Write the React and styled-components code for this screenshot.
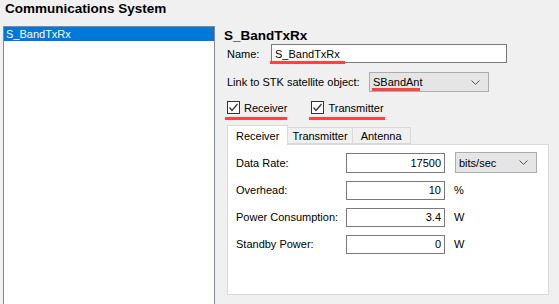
import React from "react"
import styled, { createGlobalStyle } from "styled-components"

const GlobalStyle = createGlobalStyle`
  html, body {
    margin: 0;
    padding: 0;
    background: #f0f0f0;
    overflow: hidden;
  }
  body {
    font-family: "Liberation Sans", Arial, sans-serif;
    font-size: 11px;
    color: #000;
  }
`

const Page = styled.div`
  width: 559px;
  height: 304px;
  overflow: hidden;
  display: flex;
  flex-direction: column;
`

const Title = styled.div`
  flex-shrink: 0;
  height: 26px;
  padding: 1px 0 0 5px;
  box-sizing: border-box;
  font-size: 13.5px;
  font-weight: 700;
  line-height: 16px;
`

const Body = styled.div`
  display: flex;
  flex: 1;
  min-height: 0;
  padding-left: 3px;
`

const ListBox = styled.div`
  flex-shrink: 0;
  width: 212px;
  height: 300px;
  box-sizing: border-box;
  border: 1px solid #828790;
  background: #fff;
`

const ListItem = styled.div`
  height: 14px;
  line-height: 14px;
  padding-left: 2px;
  background: ${p => (p.selected ? "#0078d7" : "transparent")};
  color: ${p => (p.selected ? "#fff" : "#000")};
`

const Detail = styled.div`
  flex: 1;
  padding: 0 0 0 9px;
  display: flex;
  flex-direction: column;
`

const Heading = styled.div`
  font-size: 13.5px;
  font-weight: 700;
  line-height: 16px;
  margin-top: 2px;
`

const Form = styled.div`
  padding-left: 3px;
  display: flex;
  flex-direction: column;
`

const Row = styled.div`
  display: flex;
  align-items: center;
  height: ${p => p.h || 20}px;
  margin-top: ${p => p.mt || 0}px;
`

const Label = styled.span`
  width: ${p => (p.w ? `${p.w}px` : "auto")};
  flex-shrink: 0;
`

const Field = styled.div`
  position: relative;
  display: flex;
`

const TextBox = styled.input`
  box-sizing: border-box;
  width: ${p => p.w}px;
  height: ${p => p.h || 19}px;
  border: 1px solid #7a7a7a;
  background: #fff;
  font: inherit;
  padding: 0 3px;
  margin: 0;
  text-align: ${p => (p.right ? "right" : "left")};
  outline: none;
  color: #000;
`

const Combo = styled.div`
  box-sizing: border-box;
  width: ${p => p.w}px;
  height: ${p => p.h || 20}px;
  margin-left: ${p => p.ml || 0}px;
  border: 1px solid #adadad;
  background: #e5e5e5;
  display: flex;
  align-items: center;
  justify-content: space-between;
  padding: 0 8px 0 3px;
`

const Mark = styled.div`
  position: absolute;
  left: ${p => p.left}px;
  top: ${p => p.top}px;
  width: ${p => p.w}px;
  height: 3px;
  background: #ff4343;
`

const CheckRow = styled.div`
  display: flex;
  align-items: center;
  height: 13px;
  margin-top: 9px;
`

const Check = styled.label`
  position: relative;
  display: flex;
  align-items: center;
  gap: 4px;
  margin-right: ${p => p.mr || 0}px;
`

const Box = styled.span`
  width: 13px;
  height: 13px;
  box-sizing: border-box;
  border: 1px solid #333;
  background: #fff;
  display: flex;
  align-items: center;
  justify-content: center;
`

const Tabs = styled.div`
  margin-top: 10px;
  display: flex;
  align-items: flex-end;
  height: 20px;
`

const Tab = styled.div`
  box-sizing: border-box;
  height: ${p => (p.active ? 20 : 17)}px;
  padding: 0 ${p => p.px}px;
  margin-bottom: ${p => (p.active ? -1 : 0)}px;
  border: 1px solid #d9d9d9;
  border-bottom: ${p => (p.active ? "none" : "1px solid #d9d9d9")};
  border-left: ${p => (p.first || p.active ? "1px solid #d9d9d9" : "none")};
  background: ${p => (p.active ? "#fff" : "#f0f0f0")};
  display: flex;
  align-items: center;
  position: relative;
  z-index: ${p => (p.active ? 1 : 0)};
`

const TabPage = styled.div`
  box-sizing: border-box;
  width: 322px;
  height: 151px;
  border: 1px solid #d9d9d9;
  background: #fff;
  padding: 7px 0 0 8px;
  display: grid;
  grid-template-columns: 110px 99px auto;
  grid-template-rows: 21px;
  grid-auto-rows: 20px;
  row-gap: 7px;
  align-content: start;
  align-items: center;
`

const Unit = styled.span`
  padding-left: 9px;
`

const Chevron = () => (
  <svg width="9" height="5" viewBox="0 0 9 5">
    <polyline points="0.5,0.5 4.5,4.5 8.5,0.5" fill="none" stroke="#555" strokeWidth="1" />
  </svg>
)

const Tick = () => (
  <svg width="11" height="11" viewBox="0 0 11 11">
    <polyline points="1.5,5.5 4,8.5 9.5,2" fill="none" stroke="#333" strokeWidth="1.2" />
  </svg>
)

const params = [
  { label: "Data Rate:", value: "17500", unit: "select" },
  { label: "Overhead:", value: "10", unit: "%" },
  { label: "Power Consumption:", value: "3.4", unit: "W" },
  { label: "Standby Power:", value: "0", unit: "W" },
]

const App = () => {
  return (
    <Page>
      <GlobalStyle />
      <Title>Communications System</Title>
      <Body>
        <ListBox>
          <ListItem selected>S_BandTxRx</ListItem>
        </ListBox>
        <Detail>
          <Heading>S_BandTxRx</Heading>
          <Form>
            <Row h={19}>
              <Label w={44}>Name:</Label>
              <Field>
                <TextBox w={236} defaultValue="S_BandTxRx" />
                <Mark left={-1} top={17} w={75} />
              </Field>
            </Row>
            <Row mt={9} h={20}>
              <Label w={142}>Link to STK satellite object:</Label>
              <Field>
                <Combo w={120}>
                  <span>SBandAnt</span>
                  <Chevron />
                </Combo>
                <Mark left={3} top={16} w={48} />
              </Field>
            </Row>
            <CheckRow>
              <Check mr={24}>
                <Box>
                  <Tick />
                </Box>
                Receiver
                <Mark left={-2} top={16} w={62} />
              </Check>
              <Check>
                <Box>
                  <Tick />
                </Box>
                Transmitter
                <Mark left={-2} top={16} w={76} />
              </Check>
            </CheckRow>
            <Tabs>
              <Tab active first px={8}>Receiver</Tab>
              <Tab px={4}>Transmitter</Tab>
              <Tab px={8}>Antenna</Tab>
            </Tabs>
            <TabPage>
              {params.map(p => (
                <React.Fragment key={p.label}>
                  <Label>{p.label}</Label>
                  <TextBox w={99} h={p.unit === "select" ? 20 : 19} right defaultValue={p.value} />
                  {p.unit === "select" ? (
                    <Combo w={82} h={21} ml={10}>
                      <span>bits/sec</span>
                      <Chevron />
                    </Combo>
                  ) : (
                    <Unit>{p.unit}</Unit>
                  )}
                </React.Fragment>
              ))}
            </TabPage>
          </Form>
        </Detail>
      </Body>
    </Page>
  )
}

export default App
